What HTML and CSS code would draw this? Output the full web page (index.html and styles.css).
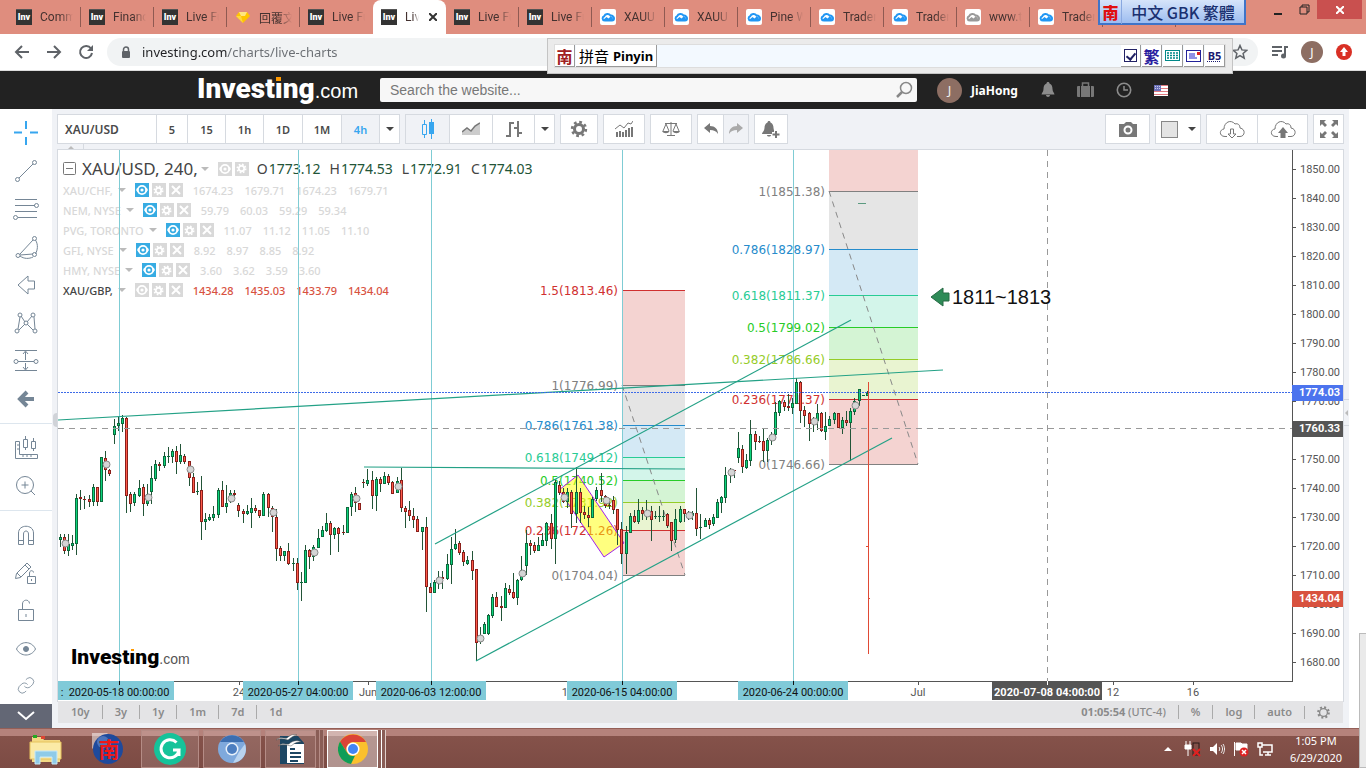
FILE: index.html
```html
<!DOCTYPE html>
<html lang="en">
<head>
    <meta charset="UTF-8">
    <meta name="viewport" content="width=device-width, initial-scale=1.0">
    <title>Live Charts - Investing.com</title>
    <link rel="stylesheet" href="styles.css">
</head>
<body>

<!-- shared icons -->
<svg class="defs" aria-hidden="true">
    <symbol id="cloud" viewBox="0 0 16 16"><rect width="16" height="16" rx="2" fill="#fff"/><path d="M4.500 11.500h7.500a2 2 0 0 0 0-4 M4.500 11.500a2.200 2.200 0 0 1-.3-4.300 3.600 3.600 0 0 1 6.300-.7 2.500 2.500 0 0 1 3 3" fill="none" stroke="currentColor" stroke-width="2"/><path d="M3 11l3.500-3 2 1.500 2.500-2.500 3 4z" fill="currentColor"/></symbol>
    <symbol id="eye" viewBox="0 0 14 14"><circle cx="7" cy="7" r="5" fill="#fff"/><path d="M1 7c3-5 9-5 12 0-3 5-9 5-12 0z" fill="#fff"/><circle cx="7" cy="7" r="2.400" fill="none" stroke="currentColor" stroke-width="1.600"/></symbol>
    <symbol id="gear" viewBox="0 0 20 20"><circle cx="10" cy="10" r="7.600" fill="none" stroke="currentColor" stroke-width="3" stroke-dasharray="3 2.970"/><circle cx="10" cy="10" r="5" fill="none" stroke="currentColor" stroke-width="3.400"/></symbol>
    <symbol id="cross" viewBox="0 0 14 14"><path d="M3 3l8 8M11 3l-8 8" stroke="#fff" stroke-width="2"/></symbol>
</svg>

<div class="tabs">
    <div class="tab"><span class="inv">Inv</span><span class="tab-name">Comm</span></div>
    <div class="tab"><span class="inv">Inv</span><span class="tab-name">Financ</span></div>
    <div class="tab"><span class="inv">Inv</span><span class="tab-name">Live Fu</span></div>
    <div class="tab"><svg width="16" height="16"><path d="M1 7l3-4h8l3 4-7 7z" fill="#ffc400"/><path d="M4 3h8l-2 4H6z" fill="#ffe680"/><path d="M1 7h5l2 7z" fill="#ffd740"/></svg><span class="tab-name">回覆文</span></div>
    <div class="tab before-active"><span class="inv">Inv</span><span class="tab-name">Live Fu</span></div>
    <div class="tab active"><span class="inv">Inv</span><span class="tab-name short">Liv</span><button class="tab-close" aria-label="Close tab"><svg width="8" height="8"><path d="M0 0l8 8M8 0l-8 8" stroke="#333" stroke-width="2"/></svg></button></div>
    <div class="tab"><span class="inv">Inv</span><span class="tab-name">Live Fu</span></div>
    <div class="tab"><span class="inv">Inv</span><span class="tab-name">Live Fu</span></div>
    <div class="tab"><svg class="tv" width="16" height="16"><use href="#cloud"/></svg><span class="tab-name">XAUU</span></div>
    <div class="tab"><svg class="tv" width="16" height="16"><use href="#cloud"/></svg><span class="tab-name">XAUU</span></div>
    <div class="tab"><svg class="tv" width="16" height="16"><use href="#cloud"/></svg><span class="tab-name">Pine W</span></div>
    <div class="tab"><svg class="tv" width="16" height="16"><use href="#cloud"/></svg><span class="tab-name">Trader</span></div>
    <div class="tab"><svg class="tv" width="16" height="16"><use href="#cloud"/></svg><span class="tab-name">Trader</span></div>
    <div class="tab"><svg class="tv grey" width="16" height="16"><use href="#cloud"/></svg><span class="tab-name">www.t</span></div>
    <div class="tab"><svg class="tv" width="16" height="16"><use href="#cloud"/></svg><span class="tab-name">Trader</span></div>
    <div class="tab"></div>
    <div class="win-buttons">
        <button aria-label="Minimize"><svg width="10" height="12"><path d="M1 10h8" stroke="#222" stroke-width="2"/></svg></button>
        <button aria-label="Restore"><svg width="11" height="11"><path d="M1 3h7v7H1zM3 3V1h7v7H8" fill="none" stroke="#222"/></svg></button>
        <button class="win-close" aria-label="Close"><svg width="8" height="8"><path d="M0 0l8 8M8 0l-8 8" stroke="#fff" stroke-width="2"/></svg></button>
    </div>
</div>

<div class="address-row">
    <button aria-label="Back"><svg width="16" height="16"><path d="M15 8H2M8 2L2 8l6 6" fill="none" stroke="#5f6368" stroke-width="2"/></svg></button>
    <button aria-label="Forward"><svg width="16" height="16"><path d="M1 8h13M8 2l6 6-6 6" fill="none" stroke="#5f6368" stroke-width="2"/></svg></button>
    <button aria-label="Reload"><svg width="16" height="16"><path d="M13 4.500A6 6 0 1 0 14 9" fill="none" stroke="#5f6368" stroke-width="2"/><path d="M15 1v6H9z" fill="#5f6368"/></svg></button>
    <div class="omnibox">
        <svg width="10" height="13"><rect x="1" y="5" width="8" height="7" rx="1" fill="#5f6368"/><path d="M2.500 5V3.500a2.500 2.500 0 0 1 5 0V5" fill="none" stroke="#5f6368" stroke-width="1.500"/></svg>
        <input class="url" type="text" aria-label="Address" value="investing.com/charts/live-charts">
        <button aria-label="Bookmark"><svg width="16" height="16"><path d="M8 1.500l1.900 4.400 4.800.4-3.600 3.200 1.100 4.700L8 11.700l-4.200 2.500 1.100-4.700L1.300 6.300l4.800-.4z" fill="none" stroke="#5f6368" stroke-width="1.500"/></svg></button>
    </div>
    <button class="media" aria-label="Media"><svg width="16" height="14"><path d="M0 2h10M0 6h10M0 10h6M13 11V2h3" fill="none" stroke="#5f6368" stroke-width="2"/><circle cx="11.500" cy="11" r="2.500" fill="#5f6368"/></svg></button>
    <button class="avatar" aria-label="Profile">J</button>
    <button class="update" aria-label="Update"><svg width="16" height="16"><circle cx="8" cy="8" r="8" fill="#d93025"/><path d="M8 3l4 5H9.500v4h-3V8H4z" fill="#fff"/></svg></button>
</div>

<header class="site-header">
    <a class="logo" href="#"><b>Invest<span class="dotless">ı</span>ng</b>.com</a>
    <form class="search">
        <input type="text" placeholder="Search the website..." aria-label="Search the website">
        <button type="button" aria-label="Search"><svg width="18" height="18"><circle cx="11" cy="7" r="5.500" fill="none" stroke="#888" stroke-width="1.500"/><path d="M7 11l-5 5" stroke="#888" stroke-width="2.500"/></svg></button>
    </form>
    <span class="user-avatar">J</span>
    <a class="user-name" href="#">JiaHong</a>
    <nav class="header-icons">
        <a href="#" aria-label="Alerts"><svg width="14" height="16"><path d="M7 0c1 0 1.500.7 1.500 1.500C11 2.300 11.500 5 11.500 7c0 3 2 4 2 5.500H.5C.5 11 2.500 10 2.500 7c0-2 .5-4.700 3-5.500C5.500.7 6 0 7 0zM5 13h4c0 1-1 2-2 2s-2-1-2-2z" fill="#8c8c8c"/></svg></a>
        <a href="#" aria-label="Portfolio"><svg width="17" height="16"><rect y="4" width="17" height="11" rx="1" fill="#777"/><path d="M3.500 4v11M13.500 4v11" stroke="#222"/><path d="M5.500 4V1h6v3" fill="none" stroke="#777" stroke-width="1.500"/></svg></a>
        <a href="#" aria-label="Market hours"><svg width="16" height="16"><circle cx="8" cy="8" r="6.700" fill="none" stroke="#8c8c8c" stroke-width="1.600"/><path d="M8 4v4h4" fill="none" stroke="#8c8c8c" stroke-width="1.500"/></svg></a>
        <a href="#" aria-label="Edition"><svg width="14" height="11"><rect width="14" height="11" fill="#fff"/><path d="M0 .5h14M0 3.500h14M0 6.500h14M0 9.500h14" stroke="#e07a80"/><rect width="7" height="6" fill="#6a70b8"/><path d="M1 1.500h5M1 3.500h5" stroke="#c8cae8" stroke-dasharray="1 1"/></svg></a>
    </nav>
</header>

<main>
    <aside class="sidebar">
        <div class="tools">
            <button aria-label="Crosshair"><svg viewBox="0 0 26 26" class="blue"><path d="M13 1v8M13 17v8M1 12.500h8M17 12.500h8"/></svg></button>
            <button aria-label="Trend line"><svg viewBox="0 0 26 26"><path d="M6 20L20 6"/><circle cx="4.500" cy="21.500" r="2"/><circle cx="21.500" cy="4.500" r="2"/></svg></button>
            <button aria-label="Fib tools"><svg viewBox="0 0 26 26"><path d="M2 3.500h22M2 9.500h20M2 15.500h22M5 21.500h19"/><circle cx="23.500" cy="9.500" r="2"/><circle cx="2.500" cy="21.500" r="2"/></svg></button>
            <button aria-label="Shapes"><svg viewBox="0 0 26 26"><path d="M7 20L20 6M22.500 6c3 5 2 10 0 14M7 22c4 3 9 3 13 1M7 21l13-1"/><circle cx="5" cy="21.500" r="2"/><circle cx="21.500" cy="4.500" r="2"/><circle cx="21.500" cy="20.500" r="2"/></svg></button>
            <button aria-label="Arrow"><svg viewBox="0 0 26 26"><path d="M5 13l10-9v5h6.500v8H15v5z"/></svg></button>
            <button aria-label="Patterns"><svg viewBox="0 0 26 26"><path d="M5 19L7 7M8 6l4 6M14 12l5-6M21 7l1 12M20 20l-6-6M12 14l-6 6"/><circle cx="4" cy="21" r="2"/><circle cx="7" cy="5" r="2"/><circle cx="13" cy="13" r="2"/><circle cx="20" cy="5" r="2"/><circle cx="22" cy="21" r="2"/></svg></button>
            <button aria-label="Position"><svg viewBox="0 0 26 26"><path d="M2 2.500h22M5 13.500h16M2 22.500h22M12.500 4v8M12.500 15v6M10 6l2.500-3L15 6M10 19l2.500 3 2.500-3"/><circle cx="3" cy="13.500" r="2"/><circle cx="23" cy="13.500" r="2"/></svg></button>
            <button aria-label="Back arrow"><svg viewBox="0 0 26 26"><path d="M21 13H8M14 6l-7 7 7 7" stroke-width="4"/></svg></button>
            <hr>
            <button aria-label="Measure"><svg viewBox="0 0 26 26"><path d="M2.500 6.500h4v13h18v4h-22zM4 10h2M4 14h2M10 20v2M14 20v2M18 20v2M10.500 4.500h4v8h-4zM12.500 1v3M12.500 13v2M18.500 6.500h4v7h-4zM20.500 3v3M20.500 14v2"/></svg></button>
            <button aria-label="Zoom in"><svg viewBox="0 0 26 26"><circle cx="12" cy="12" r="8.500"/><path d="M18 18l4 4M12 8.500v7M8.500 12h7"/></svg></button>
            <hr>
            <button aria-label="Magnet"><svg viewBox="0 0 26 26"><path d="M5.500 22.500V11c0-9 15-9 15 0v11.500h-5V12c0-4-5-4-5 0v10.500zM5.500 18.500h5M15.500 18.500h5"/></svg></button>
            <button aria-label="Stay in drawing mode"><svg viewBox="0 0 26 26"><path d="M2.500 18.500l1-5L14 3l4 4L7.500 17.500zM12 5l4 4M4 13l4 4M14.500 16.500h8v7h-8zM16.500 16v-3c0-3 4-3 4-.5M18.500 19v2"/></svg></button>
            <button aria-label="Lock drawings"><svg viewBox="0 0 26 26"><path d="M5.500 11.500h15v11h-15zM9.500 11V6c0-5 7-5 7-.5M13 16v3"/></svg></button>
            <button aria-label="Hide drawings"><svg viewBox="0 0 26 26"><path d="M3.500 13c4-8.500 15-8.500 19 0-4 8-15 8-19 0z"/><circle cx="13" cy="13" r="2.500" class="dot"/></svg></button>
            <button aria-label="Link"><svg viewBox="-4 -2 32 32"><path d="M10 13a5 5 0 0 0 7.500.5l3-3a5 5 0 0 0-7-7l-1.700 1.700M14 11a5 5 0 0 0-7.500-.5l-3 3a5 5 0 0 0 7 7l1.700-1.700"/></svg></button>
        </div>
        <button class="more" aria-label="More tools"><svg width="18" height="10"><path d="M1 1l8 7 8-7" fill="none" stroke="#fff" stroke-width="2"/></svg></button>
    </aside>

    <section class="chart-area">
        <div class="toolbar">
            <div class="group">
                <button class="symbol">XAU/USD</button>
                <button class="w31">5</button>
                <button class="w38">15</button>
                <button class="w38">1h</button>
                <button class="w39">1D</button>
                <button class="w39">1M</button>
                <button class="w38 on">4h</button>
                <button class="w20" aria-label="More intervals"><i class="caret"></i></button>
            </div>
            <div class="group">
                <button class="w43 on" aria-label="Candles"><svg width="14" height="20"><path d="M3.500 1v4M3.500 15v4M1.500 5.500h4v10h-4z" fill="none" stroke="#37a6ef"/><path d="M10.500 0v20" stroke="#37a6ef"/><path d="M8 3h5v12H8z" fill="#37a6ef"/></svg></button>
                <button class="w43" aria-label="Area"><svg width="18" height="14"><path d="M0 10l5-4 4 3 4-5 5-3v12H0z" fill="#ccc"/><path d="M0 10l5-4 4 3 4-5 5-3" fill="none" stroke="#777" stroke-width="1.500"/></svg></button>
                <button class="w42" aria-label="Bars"><svg width="18" height="18"><path d="M5 2v15M1 16h4M5 3h4M13 1v16M9 8h4M13 13h4" fill="none" stroke="#777" stroke-width="2"/></svg></button>
                <button class="w20" aria-label="More styles"><i class="caret"></i></button>
            </div>
            <button class="box w38" aria-label="Properties"><svg width="18" height="18" class="ink"><use href="#gear"/></svg></button>
            <button class="box w42" aria-label="Indicators"><svg width="18" height="18"><path d="M2 12v5M5 11v6M8 12v5M11 10v7M14 8v9M17 7v10" stroke="#777" stroke-width="2"/><path d="M0 9l5-4 4 3 4-5 3 1 2-3" fill="none" stroke="#777"/></svg></button>
            <button class="box w42" aria-label="Compare"><svg width="18" height="16"><path d="M9 1v13M5 14.500h8M3 2.500h12M4 3L1 10M4 3l3 7M14 3l-3 7M14 3l3 7" fill="none" stroke="#777"/><path d="M0 10h7.500c-1 3-6 3-7.500 0zM10.500 10H18c-1 3-6 3-7.500 0z" fill="#777"/></svg></button>
            <div class="group">
                <button class="w25" aria-label="Undo"><svg width="14" height="12"><path d="M0 5l6-5v3c5 0 8 3 8 8-2-3-4-4-8-4v3z" fill="#777"/></svg></button>
                <button class="w25 on" aria-label="Redo"><svg width="14" height="12"><path d="M14 5L8 0v3C3 3 0 6 0 11c2-3 4-4 8-4v3z" fill="#aaa"/></svg></button>
            </div>
            <button class="box w34" aria-label="Add alert"><svg width="18" height="17"><path d="M7 0c1 0 1.500.7 1.500 1.500C11 2.500 11.500 5 11.500 7c0 3 2.500 4 2.500 6H0c0-2 2.500-3 2.500-6 0-2 .5-4.500 3-5.500C5.500.7 6 0 7 0zM5 14h4c0 2-4 2-4 0z" fill="#777"/><path d="M14 9v8M10 13h8" stroke="#fff" stroke-width="4"/><path d="M14 10v7M10.500 13.500h7" stroke="#777" stroke-width="2"/></svg></button>
            <span class="space"></span>
            <button class="box w45" aria-label="Snapshot"><svg width="20" height="16"><path d="M1 3h5l2-2h5l2 2h4v13H1z" fill="#777"/><circle cx="10" cy="9" r="3.500" fill="none" stroke="#fff" stroke-width="2"/></svg></button>
            <button class="box w46" aria-label="Layout"><i class="square"></i><i class="caret"></i></button>
            <div class="group">
                <button class="w50" aria-label="Load"><svg width="26" height="18"><path d="M8 16.500H6c-6 0-6-7-1-7.500 0-7 7-10 11-5 3-1 5 1 5 4 6 1 5 8.500 0 8.500h-3" fill="none" stroke="#777"/><path d="M11.500 9h3v5h2.500l-4 4-4-4h2.500z" fill="#fff" stroke="#777"/></svg></button>
                <button class="w50" aria-label="Save"><svg width="26" height="18"><path d="M8 16.500H6c-6 0-6-7-1-7.500 0-7 7-10 11-5 3-1 5 1 5 4 6 1 5 8.500 0 8.500h-3" fill="none" stroke="#777"/><path d="M13 7l5 6h-2.500v5h-5v-5H8z" fill="#777"/></svg></button>
            </div>
            <button class="box w31" aria-label="Fullscreen"><svg width="18" height="18" fill="#777"><path d="M0 0h6L4 2l3 3-2 2-3-3-2 2zM18 0v6l-2-2-3 3-2-2 3-3-2-2zM0 18v-6l2 2 3-3 2 2-3 3 2 2zM18 18h-6l2-2-3-3 2-2 3 3 2-2z"/></svg></button>
        </div>
        <div class="strip"><span><i></i></span></div>

        <div class="chart">
            <div class="plot">
                <div class="legend">
                    <div class="legend-title">
                        <svg width="13" height="13"><rect x=".5" y=".5" width="12" height="12" rx="1" fill="none" stroke="#777"/><path d="M3 6.500h7" stroke="#777"/></svg>
                        <span class="legend-symbol">XAU/USD, 240,</span><i class="caret"></i>
                        <button aria-label="Hide"><svg><use href="#eye"/></svg></button><button aria-label="Settings"><svg class="w"><use href="#gear"/></svg></button>
                        <dl><dt>O</dt><dd>1773.12</dd><dt>H</dt><dd>1774.53</dd><dt>L</dt><dd>1772.91</dd><dt>C</dt><dd>1774.03</dd></dl>
                    </div>
                    <div id="studies"></div>
                </div>
                <svg class="canvas"><g id="canvas" transform="translate(-58 -150)"></g></svg>
                <div class="watermark"><b>Invest<span class="dotless">ı</span>ng</b>.com</div>
            </div>
            <div class="prices">
                <ol>
                    <li>1850.00</li><li>1840.00</li><li>1830.00</li><li>1820.00</li><li>1810.00</li><li>1800.00</li>
                    <li>1790.00</li><li>1780.00</li><li>1770.00</li><li>1760.00</li><li>1750.00</li><li>1740.00</li>
                    <li>1730.00</li><li>1720.00</li><li>1710.00</li><li>1700.00</li><li>1690.00</li><li>1680.00</li>
                </ol>
                <span class="price-tag last-price">1774.03</span>
                <span class="price-tag cursor-price">1760.33</span>
                <span class="price-tag gbp-price">1434.04</span>
            </div>
        </div>
        <span class="nub"></span>
        <span class="panel-arrow"></span>

        <div class="ranges">
            <button>10y</button><button>3y</button><button>1y</button><button>1m</button><button>7d</button><button>1d</button>
            <span class="space"></span>
            <button class="clock"><b>01:05:54</b> (UTC-4)</button><button>%</button><button>log</button><button>auto</button><button aria-label="Chart settings"><svg width="13" height="13" viewBox="0 0 20 20"><circle cx="10" cy="10" r="8" fill="none" stroke="#888" stroke-width="3.500" stroke-dasharray="3 3.280"/><circle cx="10" cy="10" r="6" fill="none" stroke="#888" stroke-width="2"/></svg></button>
        </div>
    </section>
</main>

<footer class="taskbar">
    <button class="task" aria-label="Explorer"><svg width="34" height="32"><path d="M3 4h10l2 3h16v22H3z" fill="#f3d984"/><path d="M4 2h4v3H4z" fill="#2a2"/><path d="M12 3h4v3h-4z" fill="#d43"/><path d="M1 9h31v17H1z" fill="#fbeaa6" stroke="#e6c35c"/><path d="M6 31V18h22v13h-5v-7H11v7z" fill="#8fcbe8" stroke="#c8e9f8"/></svg></button>
    <button class="task" aria-label="NJStar"><svg width="32" height="32"><path d="M0 0h16L0 16z" fill="#fff" opacity=".5"/><circle cx="16" cy="16" r="15" fill="#1e4a9c"/><circle cx="11" cy="9" r="6" fill="#6b8fd0" opacity=".6"/><text x="17" y="24" class="nan" font-size="21">南</text></svg></button>
    <button class="task open" aria-label="Grammarly"><svg width="32" height="32"><circle cx="16" cy="16" r="16" fill="#15c39a"/><path d="M22.500 9.500A9 9 0 1 0 25 17h-6M25 17v6" fill="none" stroke="#fff" stroke-width="3"/></svg></button>
    <button class="task open" aria-label="Chromium"><svg width="30" height="30"><circle cx="15" cy="15" r="14" fill="#7fa9dc"/><path d="M3 8A14 14 0 0 1 27 8H15z" fill="#3c6eb0"/><path d="M28 10a14 14 0 0 1-12 19l6-11z" fill="#b9d3ef"/><circle cx="15" cy="15" r="6.500" fill="#e9f1fa"/><circle cx="15" cy="15" r="5" fill="#4c7ec0"/></svg></button>
    <button class="task open stacked" aria-label="OpenOffice Writer"><svg width="32" height="32"><path d="M5 3h18l6 7v21H5z" fill="#1d4663"/><path d="M12 11h17v19H12z" fill="#fff"/><path d="M15 16h5M15 20h11M15 24h11M15 28h8" stroke="#1d4663" stroke-width="2"/><path d="M1 7c5-4 8-1 11-2 4-4 8-4 10-3-5 1-6 3-9 5-4-1-8-2-12 0zM3 13c5-4 8-1 11-2 4-4 9-4 12-2-6 0-7 2-10 4-4-1-9-2-13 0z" fill="#fff" stroke="#555" stroke-width=".5"/></svg></button>
    <button class="task open stacked current" aria-label="Chrome"><svg width="30" height="30"><circle cx="15" cy="15" r="15" fill="#fbc02d"/><path d="M2 8A15 15 0 0 1 28 8H15a7 7 0 0 0-6 10z" fill="#db4437"/><path d="M2 7.500l7 11a7 7 0 0 0 8 3.200L13 30A15 15 0 0 1 2 7.500z" fill="#0f9d58"/><circle cx="15" cy="15" r="6.500" fill="#fff"/><circle cx="15" cy="15" r="5" fill="#4285f4"/></svg></button>
    <span class="space"></span>
    <div class="tray">
        <svg width="8" height="4"><path d="M4 0l4 4H0z" fill="#fff"/></svg>
        <svg width="17" height="17"><path d="M1 5h6v4H1zM2 1v4M6 1v4M4 9v7" fill="#fff" stroke="#fff"/><rect x="9" y="3" width="6" height="12" fill="none" stroke="#2a1a18"/><path d="M9 9l7 7M16 9l-7 7" stroke="#e02020" stroke-width="2"/></svg>
        <svg width="16" height="14"><path d="M1 5h3l4-4v12L4 9H1z" fill="#fff"/><path d="M10 5c1 1 1 3 0 4M12 3c2 2 2 6 0 8M14 2c2 3 2 7 0 10" fill="none" stroke="#eee"/></svg>
        <svg width="16" height="16"><path d="M1.500 1v14M3 2h5l1 1h5v7H9L8 9H3z" fill="#fff" stroke="#fff"/><circle cx="11" cy="11" r="4.500" fill="#d22"/><path d="M9 9l4 4M13 9l-4 4" stroke="#fff" stroke-width="1.500"/></svg>
        <svg width="16" height="14"><path d="M5 3h10v7H6M8 13h6M11 10v3M1 1h4v4H1zM3 5v8h3" fill="none" stroke="#fff" stroke-width="1.500"/></svg>
        <div class="time">1:05 PM<br>6/29/2020</div>
    </div>
</footer>

<div class="ime-lang"><span class="nan-red">南</span><span class="ime-text">中文&nbsp;GBK&nbsp;繁體</span></div>
<div class="ime-bar">
    <div class="ime-inner">
        <button class="ime-nan">南</button><button class="ime-mode">拼音 <b>Pinyin</b></button>
        <span class="space"></span>
        <label class="ime-check"><input type="checkbox" checked aria-label="Enable input"></label>
        <button class="ime-fan">繁</button>
        <button aria-label="Keyboard"><svg width="15" height="12"><rect x=".5" y=".5" width="14" height="10" fill="#fff" stroke="#088"/><path d="M2 3h12M2 5.500h12M2 8h12" stroke="#088" stroke-width="1.500" stroke-dasharray="2 1"/></svg></button>
        <button aria-label="Notes"><svg width="15" height="12"><rect x=".5" y=".5" width="14" height="11" fill="#fff" stroke="#229"/><path d="M3 4h6M3 6h6M3 8h8" stroke="#22c"/><rect x="11" y="2" width="3" height="3" fill="#d22"/></svg></button>
        <button class="ime-b5">B5</button>
    </div>
</div>
<div class="edge-panel"></div>

<script src="chart.js"></script>
</body>
</html>
```
FILE: styles.css
```css
* {
    box-sizing: border-box;
}
body {
    margin: 0;
    height: 100vh;
    display: flex;
    flex-direction: column;
    overflow: hidden;
    background: #fff;
    font-family: "Noto Sans", "Noto Sans CJK TC", sans-serif;
    font-size: 12px;
    color: #444;
}
button {
    padding: 0;
    border: 0;
    background: none;
    font: inherit;
    color: inherit;
    display: flex;
    align-items: center;
    justify-content: center;
    cursor: pointer;
}
a {
    color: inherit;
    text-decoration: none;
}
.defs {
    display: none;
}
.space {
    flex: 1;
}
.caret {
    border: 4px solid transparent;
    border-top: 4px solid #444;
    border-bottom: 0;
}

/* browser tabs */
.tabs {
    flex: none;
    height: 34px;
    padding-left: 8px;
    display: flex;
    background: #df8d7e;
}
.tab {
    position: relative;
    flex: none;
    width: 73px;
    padding-left: 8px;
    display: flex;
    align-items: center;
    gap: 8px;
}
.tab::after {
    content: "";
    position: absolute;
    right: 0;
    top: 7px;
    width: 1px;
    height: 20px;
    background: #8f5a52;
}
.tab.active::after, .before-active::after {
    display: none;
}
.tab.active {
    background: #fff;
    border-radius: 8px 8px 0 0;
}
.inv {
    width: 16px;
    height: 16px;
    line-height: 15px;
    background: #333;
    color: #fff;
    font-family: Roboto, sans-serif;
    font-size: 9px;
    font-weight: 900;
    text-align: center;
    border-top: 1px solid #555;
}
.tab-name {
    width: 33px;
    overflow: hidden;
    white-space: nowrap;
    font-family: Roboto, "Noto Sans CJK TC", sans-serif;
    color: #443230;
    -webkit-mask-image: linear-gradient(90deg, #000 60%, transparent);
    mask-image: linear-gradient(90deg, #000 60%, transparent);
}
.tab-name.short {
    width: 14px;
}
.tab-close {
    width: 12px;
}
.tv {
    color: #2196f3;
}
.tv.grey {
    color: #999;
}
.win-buttons {
    margin-left: auto;
    margin-right: 4px;
    display: flex;
    align-items: flex-start;
}
.win-buttons button {
    width: 26px;
    height: 19px;
}
.win-buttons .win-close {
    width: 45px;
    background: #c9504f;
}

/* address row */
.address-row {
    flex: none;
    height: 37px;
    padding: 0 14px;
    display: flex;
    align-items: center;
    border-bottom: 1px solid #dcdcdc;
}
.address-row > button {
    width: 16px;
    margin-right: 16px;
}
.omnibox {
    flex: 1;
    height: 28px;
    margin-right: 14px;
    margin-left: -3px;
    padding: 0 10px 0 14px;
    display: flex;
    align-items: center;
    border-radius: 14px;
    background: #f1f3f4;
}
.url {
    flex: 1;
    min-width: 0;
    margin: 0 10px 0 11px;
    padding: 0;
    border: 0;
    font: 13px "Noto Sans", sans-serif;
    color: transparent;
    background: linear-gradient(90deg, #202124 85px, #6a6e73 85px);
    -webkit-background-clip: text;
    background-clip: text;
}
.address-row .avatar {
    width: 22px;
    height: 22px;
    margin-right: 13px;
    border-radius: 50%;
    background: #8d6e63;
    color: #fff;
}
.address-row .media {
    margin-right: 13px;
}
.address-row .update {
    margin-right: 0;
}

/* investing.com header */
.site-header {
    flex: none;
    height: 38px;
    padding-left: 197px;
    display: flex;
    align-items: center;
    background: #222;
}
.logo {
    width: 183px;
    color: #fff;
    font: 20px/32px "Liberation Sans", Arial, sans-serif;
    white-space: nowrap;
}
.logo b {
    font: 900 28px/32px Roboto, sans-serif;
}
.dotless {
    position: relative;
}
.dotless::after {
    content: "";
    position: absolute;
    left: 20%;
    top: 16%;
    width: 60%;
    height: 10%;
    background: #f90;
}
.search {
    width: 537px;
    height: 24px;
    display: flex;
    background: #f7f7f7;
    border-radius: 2px;
}
.search input {
    flex: 1;
    padding: 0 10px;
    border: 0;
    background: none;
    font: 14px "Liberation Sans", Arial, sans-serif;
}
.search input::placeholder {
    color: #777;
}
.search button {
    width: 26px;
}
.user-avatar {
    width: 25px;
    height: 25px;
    margin-left: 20px;
    line-height: 25px;
    border-radius: 50%;
    text-align: center;
    background: #8d6e63;
    color: #eee;
    font-size: 13px;
}
.user-name {
    width: 70px;
    margin-left: 9px;
    font: bold 12px "Noto Sans", sans-serif;
    color: #fff;
}
.header-icons {
    display: flex;
    align-items: center;
    gap: 22px;
}
.header-icons a {
    display: flex;
}

/* drawing tools */
main {
    flex: 1;
    min-height: 0;
    display: flex;
}
.sidebar {
    flex: none;
    width: 52px;
    display: flex;
    flex-direction: column;
}
.tools {
    flex: 1;
    min-height: 0;
    padding-top: 5px;
    overflow: hidden;
}
.tools button {
    width: 52px;
    height: 38px;
}
.tools svg {
    width: 26px;
    height: 26px;
    fill: none;
    stroke: #758696;
    stroke-width: 1;
}
.tools .blue {
    stroke: #37a6ef;
    stroke-width: 2;
}
.tools .dot {
    fill: #758696;
}
.tools hr {
    margin: 5px 0;
    border: 0;
    border-top: 1px solid #dde6ee;
}
.more {
    height: 24px;
    background: #636775;
}

/* chart frame */
.chart-area {
    position: relative;
    flex: 1;
    min-width: 0;
    margin-right: 17px;
    padding: 0 6px 5px 6px;
    display: flex;
    flex-direction: column;
    background: #f0f2f6;
}
.toolbar {
    flex: none;
    height: 35px;
    margin: 0 -1px;
    padding-top: 5px;
    display: flex;
    gap: 5px;
    color: #4a4a4a;
    font-weight: 600;
    font-size: 11px;
}
.group, .box {
    height: 30px;
    border: 1px solid #d6dae0;
    background: #fff;
}
.group {
    display: flex;
}
.group button + button {
    border-left: 1px solid #d6dae0;
}
.group .on {
    background: #f0f2f6;
    color: #37a6ef;
}
.symbol {
    width: 98px;
    padding-left: 7px;
    justify-content: flex-start;
    font-size: 12px;
}
.w20 { width: 20px; }
.w25 { width: 25px; }
.w31 { width: 31px; }
.w34 { width: 34px; }
.w38 { width: 38px; }
.w39 { width: 39px; }
.w42 { width: 42px; }
.w43 { width: 43px; }
.w45 { width: 45px; }
.w46 { width: 46px; gap: 10px; }
.w50 { width: 50px; }
.ink {
    color: #777;
}
.square {
    width: 17px;
    height: 17px;
    border: 1px solid #888;
    background: #e4e4e4;
}
.strip {
    flex: none;
    height: 6px;
}
.strip span {
    width: 26px;
    height: 6px;
    display: flex;
    align-items: center;
    justify-content: center;
    border-right: 1px solid #d6dae0;
}
.strip i {
    border: 3px solid transparent;
    border-bottom-color: #bbb;
    border-top: 0;
}
.chart {
    flex: 1;
    min-height: 0;
    display: flex;
    background: #fff;
    box-shadow: 0 0 0 1px #d6dae0;
}
.nub {
    position: absolute;
    left: 1px;
    top: 304px;
    width: 4px;
    height: 14px;
    border-radius: 4px 0 0 4px;
    background: #d0d3d8;
}
.panel-arrow {
    position: absolute;
    right: 0;
    top: 290px;
    width: 5px;
    height: 27px;
    border: 1px solid #d6dae0;
    border-width: 1px 0;
}
.panel-arrow::after {
    content: "";
    position: absolute;
    left: 1px;
    top: 10px;
    border: 3px solid transparent;
    border-right-color: #bbb;
    border-left: 0;
}
.plot {
    position: relative;
    flex: 1;
    min-width: 0;
}
.canvas {
    position: absolute;
    left: 0;
    top: 0;
    width: 100%;
    height: 100%;
    overflow: hidden;
    pointer-events: none;
}
.fib {
    font: 12px "DejaVu Sans", sans-serif;
    text-anchor: end;
}
.date {
    font: 11px Roboto, sans-serif;
    text-anchor: middle;
}
.date.bold {
    font-weight: bold;
}
.note {
    font: 20px "Liberation Sans", Arial, sans-serif;
}
.watermark {
    position: absolute;
    left: 13px;
    bottom: 30px;
    font: 14px/24px "Liberation Sans", Arial, sans-serif;
    color: #555;
}
.watermark b {
    font: 900 21px/24px Roboto, sans-serif;
    color: #000;
}

/* legend */
.legend {
    position: absolute;
    left: 5px;
    top: 7px;
}
.legend .caret {
    border-top-color: #bbb;
}
.legend button {
    width: 14px;
    height: 14px;
    background: #d9d9d9;
    color: #d9d9d9;
}
.legend button svg {
    width: 14px;
    height: 14px;
}
.legend button .w {
    width: 11px;
    height: 11px;
    color: #fff;
}
.legend .shown {
    background: #37ace3;
    color: #37ace3;
}
.legend-title {
    height: 23px;
    display: flex;
    align-items: center;
    gap: 3px;
}
.legend-symbol {
    margin: 0 0 0 3px;
    font-size: 17px;
}
.legend-title button:first-of-type {
    margin-left: 6px;
}
.legend dl {
    margin: 0 0 0 5px;
    display: flex;
    font-size: 14px;
}
.legend dd {
    margin: 0 9px 0 1px;
    color: #225437;
}
.study {
    height: 20px;
    display: flex;
    align-items: center;
    color: #d8d8d8;
    font-size: 11px;
    font-weight: 500;
}
.study .caret {
    margin: 0 9px 0 5px;
}
.study button {
    margin-right: 3px;
}
.study button + .value {
    margin-left: 7px;
}
.study .value {
    margin-right: 11px;
}
.study.live {
    color: #444;
}
.study.live .value {
    color: #d8523f;
}

/* price scale */
.prices {
    position: relative;
    flex: none;
    width: 51px;
    font: 11px Roboto, sans-serif;
    color: #555;
}
.prices ol {
    height: 532px;
    margin: 0;
    padding: 5px 0 0;
    border-left: 1px solid #555;
    overflow: hidden;
    list-style: none;
}
.prices li {
    height: 29px;
    line-height: 29px;
    display: flex;
    align-items: center;
    gap: 4px;
}
.prices li::before {
    content: "";
    width: 3px;
    height: 1px;
    background: #555;
}
.price-tag {
    position: absolute;
    left: 0;
    width: 51px;
    height: 16px;
    padding-left: 7px;
    line-height: 16px;
    color: #fff;
    font-weight: bold;
}
.last-price {
    top: 235px;
    background: #4c74ee;
}
.cursor-price {
    top: 271px;
    background: #555;
}
.gbp-price {
    top: 441px;
    background: #d8523f;
}

/* bottom bar */
.ranges {
    flex: none;
    height: 22px;
    padding: 0 1px;
    display: flex;
    align-items: center;
    background: #e4e4e6;
    color: #8a8a8a;
    font-size: 11px;
    line-height: 14px;
    font-weight: 600;
}
.ranges button {
    padding: 0 12px;
    white-space: pre;
}
.ranges button + button {
    border-left: 1px solid #aaa;
}
.ranges .clock {
    font-weight: 500;
}

/* windows taskbar */
.taskbar {
    flex: none;
    height: 40px;
    padding-left: 17px;
    display: flex;
    align-items: center;
    gap: 4px;
    border-top: 1px solid #945f57;
    background: linear-gradient(#b5827b 7px, #85524a 7px, #7c4b44);
}
.task {
    width: 58px;
    height: 38px;
}
.task.open {
    border: 1px solid #b58c86;
    background: rgba(255, 255, 255, 0.12);
}
.task.stacked {
    width: 51px;
    margin-right: 7px;
    box-shadow: 3px 0 0 #8a5d56, 4px 0 0 #b58c86, 7px 0 0 #8a5d56, 8px 0 0 #b58c86;
}
.task.current {
    border-color: #fff;
    background: rgba(255, 255, 255, 0.4);
    box-shadow: 3px 0 0 #8a5d56, 4px 0 0 #fff, 7px 0 0 #8a5d56, 8px 0 0 #e0ceca;
}
.nan {
    fill: #f01818;
    font-family: "Noto Sans CJK TC", sans-serif;
    font-weight: bold;
    text-anchor: middle;
}
.tray {
    display: flex;
    align-items: center;
    gap: 8px;
    margin-right: 23px;
    color: #fff;
}
.tray svg:first-child {
    margin-right: 4px;
}
.time {
    width: 54px;
    margin-left: 8px;
    font-size: 11px;
    line-height: 17px;
    text-align: center;
}

/* floating input method windows */
.ime-lang {
    position: absolute;
    right: 120px;
    top: 0;
    width: 148px;
    height: 25px;
    display: flex;
    align-items: center;
    border: 2px solid #3f74c8;
    border-top: 0;
    background: linear-gradient(#d6e4fa, #9dbdf0);
    color: #1a3070;
    font: 500 16px/24px "Noto Sans CJK TC", sans-serif;
}
.nan-red {
    width: 22px;
    text-align: center;
    color: #e01010;
    font-weight: 900;
    border-right: 1px solid #89a8e0;
}
.ime-text {
    flex: 1;
    text-align: center;
}
.ime-bar {
    position: absolute;
    right: 133px;
    top: 38px;
    width: 686px;
    height: 36px;
    padding: 5px 6px;
    border: 1px solid #c4c4c4;
    background: #ebebeb;
}
.ime-inner {
    height: 24px;
    display: flex;
    align-items: center;
    gap: 1px;
    background: #f3f9ff;
    border: 1px solid #ddd;
    color: #000;
}
.ime-inner button, .ime-check {
    width: 20px;
    height: 22px;
    background: #fff;
    border-right: 1px solid #999;
    border-bottom: 1px solid #999;
    display: flex;
    align-items: center;
    justify-content: center;
}
.ime-check input {
    position: relative;
    margin: 0;
    width: 13px;
    height: 13px;
    appearance: none;
    border: 1px solid #226;
}
.ime-check input:checked::after {
    content: "";
    position: absolute;
    left: 3px;
    top: 1px;
    width: 4px;
    height: 7px;
    border: solid #226;
    border-width: 0 2px 2px 0;
    transform: rotate(40deg);
}
.ime-inner .ime-nan {
    color: #a02020;
    font: bold 16px/20px "Noto Sans CJK TC", sans-serif;
}
.ime-inner .ime-mode {
    width: 81px;
    gap: 4px;
    font: 15px/20px "Noto Sans CJK TC", sans-serif;
}
.ime-mode b {
    font: bold 13px "Noto Sans", sans-serif;
}
.ime-inner .ime-fan {
    color: #2a1ea0;
    font: bold 16px/20px "Noto Sans CJK TC", sans-serif;
}
.ime-inner .ime-b5 {
    color: #1a1a70;
    font: bold 11px/14px "Noto Sans", sans-serif;
    text-decoration: underline dotted;
}
.edge-panel {
    position: absolute;
    right: 0;
    bottom: 0;
    width: 7px;
    height: 135px;
    border: 1px solid #bbb;
    border-right: 0;
    background: #eaeaea;
}
```
FILE: chart.js
```js
// x, high, body top, body bottom, low, up
const candles = [
    [60,534,537,540,547,1],[64,534,537,551,554,0],[68,534,544,551,556,1],[72,535,543,546,550,1],[76,494,498,544,555,1],
    [80,490,497,499,510,0],[84,496,499,500,509,0],[89,495,499,502,507,0],[93,484,487,502,506,1],[97,487,487,502,506,0],
    [101,457,457,502,502,1],[105,451,458,470,481,0],[109,469,470,474,476,0],[114,419,426,435,444,1],[118,417,423,426,431,1],
    [122,415,418,424,432,1],[126,417,418,496,513,0],[130,492,494,504,512,0],[134,492,494,503,506,1],[139,480,488,496,497,1],
    [143,484,487,504,516,0],[147,484,494,504,506,1],[151,466,478,492,504,1],[155,460,464,479,481,1],[159,462,464,466,471,0],
    [164,452,456,466,468,1],[168,447,456,457,463,1],[172,449,451,457,463,1],[176,446,451,462,474,0],[180,444,455,462,464,1],
    [184,454,456,462,464,0],[189,461,461,478,486,0],[193,473,477,493,493,0],[197,482,491,492,495,1],[201,476,490,522,540,0],
    [205,513,519,522,530,1],[209,514,517,520,521,1],[213,506,514,518,521,1],[218,488,490,515,518,1],[222,481,490,507,507,0],
    [226,485,503,507,513,1],[230,490,493,502,503,1],[234,490,493,495,496,0],[238,503,505,511,517,0],[243,509,511,514,523,0],
    [247,505,511,514,515,1],[251,498,508,513,528,1],[255,505,508,511,513,0],[259,510,510,516,518,0],[263,492,494,516,516,1],
    [268,493,494,508,517,0],[272,506,508,517,532,0],[276,509,517,549,561,0],[280,546,548,556,561,0],[284,551,551,556,561,1],
    [288,543,551,564,565,0],[293,558,563,564,571,1],[297,558,563,583,590,0],[301,572,582,583,601,1],[305,545,550,583,583,1],
    [309,549,550,557,569,0],[313,545,547,557,561,1],[318,529,538,548,548,1],[322,526,530,537,537,1],[326,513,523,531,532,1],
    [330,521,523,535,555,0],[334,527,528,535,539,1],[338,527,528,534,552,0],[343,525,532,533,535,0],[347,507,507,533,533,1],
    [351,492,494,507,516,1],[355,487,493,503,512,0],[359,503,503,510,510,0],[363,479,482,483,488,0],[367,469,480,484,486,1],
    [372,471,480,496,509,0],[376,477,479,496,511,1],[380,477,479,484,492,0],[384,472,476,484,484,1],[388,474,476,483,485,0],
    [392,481,482,494,494,0],[397,477,481,493,493,1],[401,468,480,508,512,0],[405,506,508,512,528,0],[409,501,510,516,521,0],
    [413,508,516,520,528,0],[417,516,519,532,532,0],[422,527,527,532,550,1],[426,517,527,587,612,0],[430,583,587,593,593,0],
    [434,580,582,593,593,1],[438,571,577,583,589,1],[442,571,577,579,589,0],[447,554,564,579,580,1],[451,537,549,565,584,1],
    [455,529,544,549,550,1],[459,541,543,553,555,0],[463,550,552,562,566,0],[467,556,560,564,565,1],[472,551,560,571,580,0],
    [476,569,569,643,661,0],[480,627,637,642,644,1],[484,622,624,634,634,1],[488,614,615,634,635,1],[492,594,597,616,618,1],
    [496,592,597,607,607,0],[501,596,606,608,621,0],[505,583,588,608,608,1],[509,585,589,593,595,0],[513,573,592,598,599,0],
    [517,579,580,598,605,1],[521,556,570,580,581,1],[526,530,543,566,575,1],[530,540,543,546,555,0],[534,542,545,551,553,0],
    [538,537,545,551,551,1],[542,533,540,546,546,1],[546,522,523,541,546,1],[551,514,523,539,549,0],[555,480,482,539,564,1],
    [559,481,485,493,495,0],[563,488,492,502,503,0],[567,488,492,502,508,1],[571,490,492,514,528,0],[576,467,492,514,523,1],
    [580,488,492,513,523,0],[584,506,512,515,519,0],[588,507,515,518,527,0],[592,497,499,518,518,1],[596,487,490,499,501,1],
    [601,473,490,496,502,0],[605,495,496,506,508,0],[609,500,505,506,509,0],[613,496,500,510,514,0],[617,509,509,530,545,0],
    [621,522,529,554,564,0],[626,526,532,554,574,1],[630,513,516,533,533,1],[634,510,516,522,523,0],[638,499,510,522,524,1],
    [642,507,510,514,520,0],[646,500,512,514,520,1],[651,506,511,520,541,0],[655,511,516,517,519,1],[659,506,516,517,522,1],
    [663,510,516,517,521,1],[667,513,514,526,528,0],[671,522,522,541,551,0],[675,509,519,540,543,1],[680,506,509,522,523,1],
    [684,509,509,514,522,0],[688,511,513,518,520,1],[692,511,513,516,520,1],[696,488,513,529,536,0],[700,514,527,528,539,1],
    [705,518,520,527,527,1],[709,518,520,525,529,0],[713,514,517,524,526,1],[717,499,502,518,518,1],[721,496,497,503,513,1],
    [725,467,475,498,503,1],[730,468,471,476,483,0],[734,470,470,471,478,0],[738,432,448,458,463,1],[742,445,449,467,473,0],
    [746,454,460,468,469,1],[750,420,434,461,466,1],[755,431,434,442,450,0],[759,436,441,442,443,0],[763,429,441,451,462,0],
    [767,438,440,451,462,1],[771,432,435,441,445,1],[775,402,412,435,438,1],[779,400,401,413,416,1],[784,400,402,407,411,0],
    [788,394,406,408,411,0],[792,398,403,408,414,1],[796,378,382,404,404,1],[800,381,382,411,423,0],[804,406,410,416,427,0],
    [809,412,413,424,441,0],[813,417,420,424,432,1],[817,404,413,421,430,1],[821,412,413,431,432,0],[825,412,426,432,440,1],
    [829,416,419,426,426,1],[834,412,413,420,424,1],[838,413,413,428,428,0],[842,417,420,428,434,1],[846,411,420,423,426,0],
    [850,408,411,423,461,1],[854,398,401,412,415,1],[859,389,389,401,406,1],[863,395,395,396,396,1],[867,391,393,396,396,1]
];

const dots = [[65,543],[106,464],[148,497],[190,469],[231,498],[273,512],[314,552],[356,498],[398,486],[439,580],
    [480,638],[522,573],[564,497],[606,500],[647,513],[689,515],[731,472],[772,437],[814,421],[855,405]];

const trends = [[58,420,943,370],[364,467,685,469],[435,544,851,320],[476,661,892,438]];

const red = "#d03030", grey = "#808080", blue = "#268ccc", teal = "#28cc95", green = "#28cc28", lime = "#95cc28";

// each level: y, label, line colour, fill of the band above it
const fibs = [
    { x: 622, end: 685, top: 290, from: 385, levels: [
        [290, "1.5(1813.46)", red, ""],
        [385, "1(1776.99)", grey, "#f4d3d1"],
        [425, "0.786(1761.38)", blue, "#e5e5e5"],
        [457, "0.618(1749.12)", teal, "#d4e9f5"],
        [480, "0.5(1740.52)", green, "#d3f5ea"],
        [502, "0.382(1731.92)", lime, "#d4f4d4"],
        [530, "0.236(1721.26)", red, "#e9f4d1"],
        [575, "0(1704.04)", grey, "#f4d3d1"]
    ]},
    { x: 829, end: 918, top: 150, from: 191, levels: [
        [191, "1(1851.38)", grey, "#f4d3d1"],
        [249, "0.786(1828.97)", blue, "#e5e5e5"],
        [295, "0.618(1811.37)", teal, "#d4e9f5"],
        [327, "0.5(1799.02)", green, "#d3f5ea"],
        [359, "0.382(1786.66)", lime, "#d4f4d4"],
        [399, "0.236(1771.37)", red, "#e9f4d1"],
        [464, "0(1746.66)", grey, "#f4d3d1"]
    ]}
];

const studies = [
    ["XAU/CHF,", "1674.23", "1679.71", "1674.23", "1679.71"],
    ["NEM, NYSE", "59.79", "60.03", "59.29", "59.34"],
    ["PVG, TORONTO", "11.07", "11.12", "11.05", "11.10"],
    ["GFI, NYSE", "8.92", "8.97", "8.85", "8.92"],
    ["HMY, NYSE", "3.60", "3.62", "3.59", "3.60"],
    ["XAU/GBP,", "1434.28", "1435.03", "1433.79", "1434.04"]
];

function line(x1, y1, x2, y2, color, extra = "") {
    return `<line x1="${x1}" y1="${y1}" x2="${x2}" y2="${y2}" stroke="${color}" ${extra}/>`;
}

function rect(x, y, w, h, fill, extra = "") {
    return `<rect x="${x}" y="${y}" width="${w}" height="${h}" fill="${fill}" ${extra}/>`;
}

function drawFib(fib) {
    let out = "";
    let prev = fib.top;
    for (const [y, label, color, fill] of fib.levels) {
        if (fill) out += rect(fib.x, prev, fib.end - fib.x, y - prev, fill);
        prev = y;
    }
    for (const [y, label, color] of fib.levels) {
        out += line(fib.x, y + 0.5, fib.end, y + 0.5, color);
        out += `<text class="fib" x="${fib.x - 4}" y="${y + 5}" fill="${color}">${label}</text>`;
    }
    return out + line(fib.x, fib.from, fib.end, prev, "#888", 'stroke-dasharray="6 5"');
}

function drawCandle([x, high, top, bottom, low, up]) {
    const edge = up ? "#0b6a3c" : "#8a1f1a";
    let out = rect(x, high, 1, Math.max(low - high, 1), "#225437");
    if (bottom - top < 3) return out + rect(x - 1, top, 3, Math.max(bottom - top, 1), edge);
    return out + rect(x - 0.5, top + 0.5, 2, bottom - top - 1, up ? "#0cd47c" : "#ff5a4a", `stroke="${edge}"`);
}

function dateTag(x, width, center, text, cls, fill, color) {
    return rect(x, 681, width, 19, fill) + line(center + 0.5, 681, center + 0.5, 685, color) +
        `<text class="date ${cls}" x="${x + width / 2}" y="696" fill="${color}">${text}</text>`;
}

function drawChart() {
    let out = fibs.map(drawFib).join("");
    for (const x of [119, 298, 431, 622, 793]) out += line(x + 0.5, 150, x + 0.5, 681, "#7fccd4");
    out += '<polygon points="559,490 578,475 624,543 604,557" fill="#ffff00" fill-opacity="0.5" stroke="#a020f0"/>';
    out += candles.map(drawCandle).join("");
    for (const [x, y] of dots) out += `<circle cx="${x + 0.5}" cy="${y + 0.5}" r="3.5" fill="#d5d5d5" stroke="#888"/>`;
    for (const [a, b, c, d] of trends) out += line(a, b, c, d, "#23a186", 'stroke-width="1.2"');
    out += line(58, 392.5, 1293, 392.5, "#3d6be8", 'stroke-dasharray="2 1"');
    out += line(58, 428.5, 1293, 428.5, "#999", 'stroke-dasharray="6 5"');
    out += line(1047.5, 150, 1047.5, 681, "#999", 'stroke-dasharray="6 5"');
    out += line(868.5, 382, 868.5, 654, "#e04a35") + line(866, 546.5, 868, 546.5, "#e04a35") + line(869, 598.5, 870, 598.5, "#e04a35");
    out += line(858, 203.5, 866, 203.5, "#5b9a80");
    out += '<path d="M931 297l12-9v5h6v8h-6v5z" fill="#2e8b57" stroke="#276b45"/>';
    out += '<text class="note" x="952" y="304" fill="#111">1811~1813</text>';

    // time scale
    out += line(58, 681.5, 1293, 681.5, "#555");
    for (const [x, text] of [[239, "24"], [368, "Jun"], [568, "15"], [918, "Jul"], [1113, "12"], [1193, "16"]]) {
        out += line(x + 0.5, 681, x + 0.5, 685, "#555") + `<text class="date" x="${x}" y="696" fill="#555">${text}</text>`;
    }
    out += rect(58, 681, 8, 19, "#80cad8") + '<text class="date" x="62" y="696" fill="#111">:</text>';
    out += dateTag(64, 110, 119, "2020-05-18 00:00:00", "", "#80cad8", "#111");
    out += dateTag(243, 110, 298, "2020-05-27 04:00:00", "", "#80cad8", "#111");
    out += dateTag(376, 110, 431, "2020-06-03 12:00:00", "", "#80cad8", "#111");
    out += dateTag(567, 110, 622, "2020-06-15 04:00:00", "", "#80cad8", "#111");
    out += dateTag(738, 110, 793, "2020-06-24 00:00:00", "", "#80cad8", "#111");
    out += dateTag(992, 110, 1047, "2020-07-08 04:00:00", "bold", "#555", "#fff");
    document.getElementById("canvas").innerHTML = out;
}

function drawStudies() {
    document.getElementById("studies").innerHTML = studies.map(([name, ...values], i) => {
        const live = i === studies.length - 1;
        return `<div class="study ${live ? "live" : ""}"><span>${name}</span><i class="caret"></i>
            <button class="${live ? "" : "shown"}" aria-label="Toggle"><svg><use href="#eye"/></svg></button>
            <button aria-label="Settings"><svg class="w"><use href="#gear"/></svg></button>
            <button aria-label="Remove"><svg><use href="#cross"/></svg></button>
            ${values.map(v => `<span class="value">${v}</span>`).join("")}</div>`;
    }).join("");
}

drawStudies();
drawChart();
```
